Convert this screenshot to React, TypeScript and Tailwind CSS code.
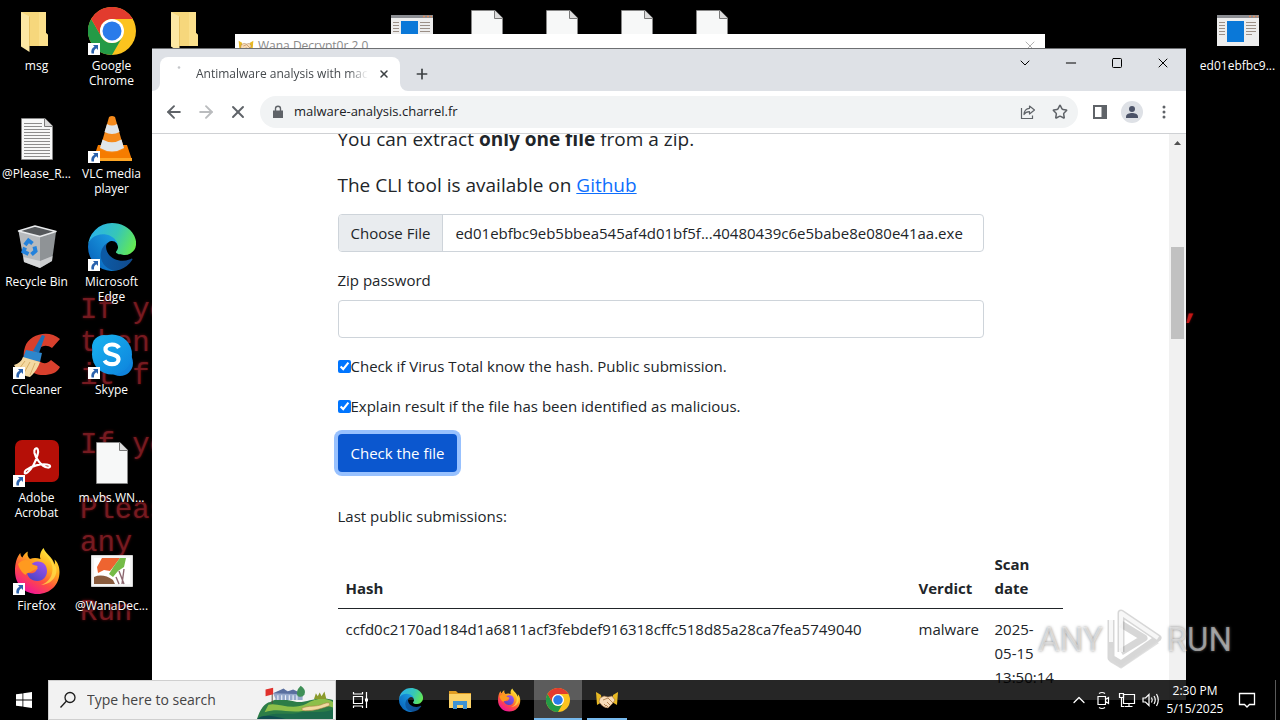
import { useState, type ReactNode } from 'react';
import {
  ArrowLeft,
  ArrowRight,
  ChevronDown,
  ChevronUp,
  Minus,
  Plus,
  Square,
  Star,
  X,
} from 'lucide-react';

type IconProps = { className?: string };

/* ---------- App icons ---------- */

function ChromeIcon({ className }: IconProps) {
  return (
    <svg viewBox="0 0 48 48" className={className} aria-hidden="true">
      <circle cx="24" cy="24" r="24" fill="#fcc31e" />
      <path d="M3.2 12A24 24 0 0 0 24 48L34.4 30A12 12 0 0 1 13.6 30Z" fill="#249a46" />
      <path d="M3.2 12A24 24 0 0 1 44.8 12H24A12 12 0 0 0 13.6 30Z" fill="#e23b2e" />
      <circle cx="24" cy="24" r="12" fill="#fff" />
      <circle cx="24" cy="24" r="9.5" fill="#2a7bea" />
    </svg>
  );
}

function EdgeIcon({ className }: IconProps) {
  return (
    <svg viewBox="0 0 256 256" className={className} aria-hidden="true">
      <defs>
        <linearGradient id="edge-a" x1="0.2" y1="0.5" x2="1" y2="0.6">
          <stop offset="0" stopColor="#0c59a4" />
          <stop offset="1" stopColor="#114a8b" />
        </linearGradient>
        <linearGradient id="edge-b" x1="0.9" y1="0.2" x2="0.2" y2="0.9">
          <stop offset="0" stopColor="#1b9de2" />
          <stop offset="1" stopColor="#0a67be" />
        </linearGradient>
        <linearGradient id="edge-c" x1="0.05" y1="0.4" x2="1" y2="0.7">
          <stop offset="0" stopColor="#2bb4e6" />
          <stop offset="0.5" stopColor="#36c6b8" />
          <stop offset="1" stopColor="#66eb4e" />
        </linearGradient>
      </defs>
      <path fill="url(#edge-a)" d="M231 190.5c-3.4 1.8-6.9 3.4-10.5 4.7a101.9 101.9 0 0 1-35.9 6.4c-47.3 0-88.5-32.5-88.5-74.3.1-11.4 6.4-21.9 16.4-27.3-42.8 1.8-53.8 46.4-53.8 72.5 0 73.9 68.1 81.4 82.8 81.4 7.9 0 19.8-2.3 27-4.6l1.3-.4a128.2 128.2 0 0 0 66.6-52.8 4 4 0 0 0-5.4-5.6z" />
      <path fill="url(#edge-b)" d="M105.7 241.4A79.2 79.2 0 0 1 83 220.1 80.7 80.7 0 0 1 112.5 100c3.2-1.5 8.5-4.1 15.6-4a32.4 32.4 0 0 1 25.7 13 31.9 31.9 0 0 1 6.3 18.7c0-.2 24.5-79.6-80-79.6-43.9 0-80 41.7-80 78.2a130.2 130.2 0 0 0 12.1 56 128 128 0 0 0 156.4 67 75.5 75.5 0 0 1-62-8z" />
      <path fill="url(#edge-c)" d="M152.3 148.9c-.9 1-3.4 2.5-3.4 5.6 0 2.6 1.7 5.2 4.8 7.3 14.4 10.1 41.7 8.7 41.8 8.7a59.9 59.9 0 0 0 30.5-8.4 61.8 61.8 0 0 0 30.4-53.2c.3-22.4-8-37.3-11.3-43.9C223.7 23.7 176.3 0 128 0A128 128 0 0 0 0 126.2c.5-36.5 36.8-66 80-66 3.5 0 23.5.3 42 10.1 16.3 8.6 24.9 18.9 30.8 29.2 6.2 10.7 7.3 24.1 7.3 29.5 0 5.3-2.7 13.3-7.8 19.9z" />
    </svg>
  );
}

function FirefoxIcon({ className }: IconProps) {
  return (
    <svg viewBox="0 0 48 48" className={className} aria-hidden="true">
      <defs>
        <linearGradient id="fx-body" x1="0.8" y1="0.05" x2="0.25" y2="0.95">
          <stop offset="0" stopColor="#ffec3d" />
          <stop offset="0.35" stopColor="#ffab1f" />
          <stop offset="0.65" stopColor="#ff4f3f" />
          <stop offset="1" stopColor="#f0139a" />
        </linearGradient>
        <linearGradient id="fx-globe" x1="0.8" y1="0" x2="0.2" y2="1">
          <stop offset="0" stopColor="#a052f0" />
          <stop offset="1" stopColor="#4a44c4" />
        </linearGradient>
      </defs>
      <path
        fill="url(#fx-body)"
        d="M30.5 1C27 5 26.5 9 27.5 12C24 10.5 20 10.5 17 12C14.5 10 14.2 7 14.8 4.5C12 6 10.5 8 9.5 10.5C8 10 7.4 7.5 7.3 6C3.5 10.5 2 17 2 24C2 37.5 11.5 47 24.5 47C37.5 47 46.5 37.5 46.5 25C46.5 19.5 44.5 15 41.5 12.5C42 14.5 42 16 41.5 17.5C39.5 9.5 33 7.5 30.5 1Z"
      />
      <path fill="url(#fx-globe)" d="M24 14.5C30 14 34 18 34 24C34 30 29.5 34 24.5 34C18 34 14 29.5 14 25C17 27.5 21 26 22.5 24.5L25 21L17.5 18.5C18.5 16.5 21 15 24 14.5Z" />
      <path fill="#ff9a1f" d="M5 17C9 12 15 12 19 15C18 17 20 18 24.5 19C25 21.5 21 22.5 18.5 24.5C16.5 26 13.5 25.5 12.5 28C9 26 6 21 5 17Z" />
      <path fill="#ffe04a" opacity=".75" d="M31 4C33 10 40 13 39.5 23C39 31 34 36 28 38C37 37.5 43.5 31 43.5 23C43.5 20 42 18 41 18.5C39 11 33.5 9 31 4Z" />
    </svg>
  );
}

function FolderIcon({ className }: IconProps) {
  return (
    <svg viewBox="0 0 48 48" className={className} aria-hidden="true">
      <path d="M8 5H33V26L35 28V39H14Z" fill="#f6d77c" />
      <path d="M26 5H33V26L35 28V39H26Z" fill="#fbe08c" />
      <path d="M8 5L16.5 9.5V45L8 39.5Z" fill="#fde8a4" />
      <path d="M16.5 9.5V39" stroke="#e3bb5a" strokeWidth=".8" />
    </svg>
  );
}

function PageIcon({ className, lined = false }: IconProps & { lined?: boolean }) {
  return (
    <svg viewBox="0 0 48 48" className={className} aria-hidden="true">
      <path d="M8.5 3.5H32L39.5 11V44.5H8.5Z" fill="#f7f8f8" stroke="#8c8c8c" strokeWidth=".7" />
      <path d="M31.5 3.5V11.5H39.5" fill="#dcdcdc" stroke="#7a7a7a" strokeWidth="1" />
      {lined && (
        <path
          d="M11 8.5H29M11 11.5H29M11 14.5H37M11 17.5H37M11 20.5H37M11 23.5H37M11 26.5H37M11 29.5H37M11 32.5H37M11 35.5H37M11 38.5H37M11 41.5H37"
          stroke="#8d8d8d"
          strokeWidth="1"
        />
      )}
    </svg>
  );
}

function ProgramIcon({ className }: IconProps) {
  return (
    <svg viewBox="0 0 48 48" className={className} aria-hidden="true">
      <path d="M3 8H45V39H3Z" fill="#ededed" />
      <path d="M3 8H45V11H3Z" fill="#8b8d92" />
      <path d="M35 9.5H37M39 9.5H41M42.5 9.5H44" stroke="#e08a5a" strokeWidth="1.5" />
      <path d="M13 14H30V35H13Z" fill="#0a78d8" />
      <path d="M5 15.5H11M5 18.5H11M5 21.5H11M5 24.5H11M5 27.5H11M32 15.5H42M32 18.5H42M32 21.5H42M32 24.5H42M32 27.5H38" stroke="#9b8f86" strokeWidth="1" />
    </svg>
  );
}

function VlcIcon({ className }: IconProps) {
  return (
    <svg viewBox="0 0 48 48" className={className} aria-hidden="true">
      <path d="M10 30H39L44 45H5Z" fill="#f57c00" />
      <path d="M5 43H44V46H5Z" fill="#ffa726" />
      <path d="M21 2Q24 0 27 2L36 34Q24 41 12 34Z" fill="#f58a1c" />
      <path d="M19 9Q24 12 29 9L31.5 17Q24 21 16.5 17Z" fill="#dfe5ea" />
      <path d="M14.5 24.5Q24 30 33.5 24.5L36 33Q24 40 12 33Z" fill="#dfe5ea" />
    </svg>
  );
}

function RecycleIcon({ className }: IconProps) {
  return (
    <svg viewBox="0 0 48 48" className={className} aria-hidden="true">
      <path d="M5.5 8L27 13V45L11 39Z" fill="#b7babd" />
      <path d="M43 9L27 13V45L39 38Z" fill="#8f9396" />
      <path d="M5.5 8L22 3L43 8.5L27 13.5Z" fill="#55585b" stroke="#e8eaec" strokeWidth="1.5" strokeLinejoin="round" />
      <path d="M10.5 34L27 38V45L11 39ZM27 38L39.5 33L39 38L27 45Z" fill="#e4e6e7" opacity=".7" />
      <g fill="none" stroke="#2382dc" strokeWidth="4">
        <path d="M12 22L15.500 17.500L19.500 20.500" />
        <path d="M21.500 23.500L22.500 28L18.500 31.500" />
        <path d="M15.500 31L10.500 28.500L12 24.500" />
      </g>
    </svg>
  );
}

function CCleanerIcon({ className }: IconProps) {
  return (
    <svg viewBox="0 0 48 48" className={className} aria-hidden="true">
      <path d="M47 8C36-2 16 3 12 16C7 30 16 44 30 44C38 44 44 42 47 36L38 29C34 34 26 33 24 26C22 18 31 11 39 17Z" fill="#d8402d" />
      <path d="M29 4L32 5L26 22L20 20Z" fill="#1d6fb7" />
      <path d="M13 19L29 22L27 31L10 27Z" fill="#2d86cc" />
      <path d="M10 26L27 31Q24 40 17 46Q6 44 1 34Q8 32 10 26Z" fill="#f4d9a2" />
      <path d="M12 30L6 38M17 31L11 42M22 32L17 44" stroke="#d7ad65" strokeWidth="1" />
    </svg>
  );
}

function SkypeIcon({ className }: IconProps) {
  return (
    <svg viewBox="0 0 48 48" className={className} aria-hidden="true">
      <defs>
        <linearGradient id="skype-bg" x1="0" y1="0" x2="1" y2="1">
          <stop offset="0" stopColor="#18b4f0" />
          <stop offset="1" stopColor="#0e82dc" />
        </linearGradient>
      </defs>
      <circle cx="16" cy="16" r="12" fill="url(#skype-bg)" />
      <circle cx="32" cy="32" r="13" fill="#0f84dd" />
      <circle cx="24" cy="23.5" r="20" fill="url(#skype-bg)" />
      <path
        d="M31 17C29.5 14.3 26.8 13.5 24 13.5C20 13.5 17.5 15.5 17.5 18.3C17.5 25 30.5 21.5 30.5 28.5C30.5 31.5 27.5 33.2 24 33.2C20.5 33.2 18 32 16.5 29.5"
        fill="none"
        stroke="#fff"
        strokeWidth="4.2"
      />
    </svg>
  );
}

function AcrobatIcon({ className }: IconProps) {
  return (
    <svg viewBox="0 0 48 48" className={className} aria-hidden="true">
      <rect x="2" y="1" width="44" height="42" rx="7" fill="#b50f07" />
      <path
        d="M22 10C24.5 8 26 11 24.5 16C22.5 23 18 30.5 14.5 33.5C11.5 36 10.5 33 13 31C18 27 28 24.5 34 25.5C38.5 26.2 37.5 29 34.5 28.5C28 27.5 22.500 18.500 21.500 14C21.200 12 21.300 10.700 22 10Z"
        fill="none"
        stroke="#fff"
        strokeWidth="2.2"
      />
    </svg>
  );
}

function PictureIcon({ className }: IconProps) {
  return (
    <svg viewBox="0 0 48 48" className={className} aria-hidden="true">
      <path d="M3.5 8.5H44.5V39.5H3.5Z" fill="#f4f4f4" stroke="#d5d5d5" />
      <path d="M6 11H42V37H6Z" fill="#fff" />
      <path d="M14 11H32L26 19L22 24L16 23L10 26L9 20Z" fill="#ee6430" />
      <path d="M32 11H38L36 20L30 24L25 30L21 27L26 19Z" fill="#74bb47" />
      <path d="M6 30Q15 26 25 33L27 37H6Z" fill="#8a5c3e" />
      <path d="M31 24L36 37M36 22L34 37M28 30L31 37" stroke="#8d6870" strokeWidth="1.4" />
    </svg>
  );
}

function HandshakeIcon({ className }: IconProps) {
  return (
    <svg viewBox="0 0 24 24" className={className} aria-hidden="true">
      <path d="M1 4L6 7L7 14L2 17Z" fill="#e8b923" />
      <path d="M23 4L18 7L17 14L22 17Z" fill="#e8b923" />
      <path d="M5 10L9 8L13 9L17 8L20 12L18 15L13 20Q8 20 4 14Z" fill="#f8dcb8" stroke="#9a6a3a" strokeWidth=".6" />
      <path d="M8 12L13 10L18 15M9 16L11 18M12 14L15 17M11 17L13 19" fill="none" stroke="#a5713e" strokeWidth=".8" />
    </svg>
  );
}

function ExplorerIcon({ className }: IconProps) {
  return (
    <svg viewBox="0 0 24 24" className={className} aria-hidden="true">
      <path d="M1 3H8L10 5H23V8H1Z" fill="#e09c22" />
      <path d="M1 6H23V20H1Z" fill="#fbd268" />
      <path d="M5 21V13H19V21H15V17H9V21Z" fill="#3f93d2" />
    </svg>
  );
}

function ShareIcon({ className }: IconProps) {
  return (
    <svg viewBox="0 0 16 16" className={className} fill="none" stroke="#5f6368" strokeWidth="1.2" aria-hidden="true">
      <path d="M1.5 4V14.5H12.5V11.5" />
      <path d="M9.5 2L14.5 6L9.5 10V7.7C7 7.7 5.2 8.5 4 10.5C4.2 7 6.2 4.6 9.5 4.3Z" strokeLinejoin="round" />
    </svg>
  );
}

function GolfArt({ className }: IconProps) {
  return (
    <svg viewBox="0 0 80 40" className={className} aria-hidden="true">
      <path d="M0 40C3 30 8 23 14 22C22 17 32 20 42 22C54 23 62 15 80 20V40Z" fill="#2c7d47" />
      <path d="M12 25C22 22 36 32 52 24C62 18 72 17 80 22V28C66 23 58 31 44 32C30 33 22 28 8 33Z" fill="#8dbf4a" />
      <path d="M5 40C14 31 28 36 42 34C56 31 66 35 80 30V40Z" fill="#1c6a4c" />
      <path d="M0 40C6 34 18 37 30 40Z" fill="#0f4d50" />
      <path d="M47 29C54 25 62 28 70 24Q78 21 76 26C66 30 56 32 48 31Z" fill="#f0d9a0" stroke="#a97d3f" strokeWidth=".6" />
      <path d="M17 13L28 9L34 11L48 13V20H20Z" fill="#96a9cc" />
      <path d="M17 13L28 8L32 11L38 9L49 14Z" fill="#5a6f9f" />
      <path d="M22 15V20M26 15V20M30 15V20M34 15V20M38 15V20M42 15V20" stroke="#eef2fa" strokeWidth="1.2" />
      <path d="M46 5Q52 9 50 14Q48 18 43 16Q40 11 46 5Z" fill="#3f8f57" />
      <path d="M60 19L62 13L64 16L66 12L68 16L71 11L73 19Z" fill="#8a9a2c" />
      <path d="M16 8V24" stroke="#5a4a3a" strokeWidth="1" />
      <path d="M17 7L9 9V16L17 14Z" fill="#e0312c" />
    </svg>
  );
}

/* ---------- Desktop ---------- */

function ShortcutArrow() {
  return (
    <svg viewBox="0 0 12 12" className="absolute bottom-0 left-0 size-3" aria-hidden="true">
      <path d="M0 0H12V12H0Z" fill="#fff" />
      <path d="M5 2H10V7L8.3 5.3C6.5 6.5 5.8 8 6 10.5H3.5C2.8 7 4 5 6.5 3.7Z" fill="#2a62ad" />
    </svg>
  );
}

function DesktopItem({ label, shortcut, children }: { label?: string; shortcut?: boolean; children: ReactNode }) {
  return (
    <a href="#" className="flex h-[108px] w-[75px] flex-col items-center pt-[7px] pr-0.5">
      <span className="relative block size-12">
        {children}
        {shortcut && <ShortcutArrow />}
      </span>
      {label && (
        <span className="mt-[3px] text-center text-xs leading-[15px] text-white [text-shadow:0_1px_2px_#000]">
          {label}
        </span>
      )}
    </a>
  );
}

function Wallpaper() {
  return (
    <div className="absolute inset-x-20 top-[294px] font-['Liberation_Mono','Courier_New',monospace] text-[29px] leading-[33px] text-[#761a20] [text-shadow:0_0_3px_#5a0c10]">
      <div className="flex justify-between">
        <span>If you</span>
        <span className="font-bold text-[#c01818]">,</span>
      </div>
      <p>then</p>
      <p>it from</p>
      <p className="mt-9">If you</p>
      <p className="mt-8">Please</p>
      <p>any</p>
      <p className="mt-9">Run</p>
    </div>
  );
}

function DesktopIcons() {
  return (
    <div className="absolute inset-x-0 top-0 flex pr-1">
      <div>
        <DesktopItem label="msg"><FolderIcon /></DesktopItem>
        <DesktopItem label="@Please_R..."><PageIcon lined /></DesktopItem>
        <DesktopItem label="Recycle Bin"><RecycleIcon /></DesktopItem>
        <DesktopItem label="CCleaner" shortcut><CCleanerIcon /></DesktopItem>
        <DesktopItem label="Adobe Acrobat" shortcut><AcrobatIcon /></DesktopItem>
        <DesktopItem label="Firefox" shortcut><FirefoxIcon /></DesktopItem>
      </div>
      <div>
        <DesktopItem label="Google Chrome" shortcut><ChromeIcon /></DesktopItem>
        <DesktopItem label="VLC media player" shortcut><VlcIcon /></DesktopItem>
        <DesktopItem label="Microsoft Edge" shortcut><EdgeIcon /></DesktopItem>
        <DesktopItem label="Skype" shortcut><SkypeIcon /></DesktopItem>
        <DesktopItem label="m.vbs.WN..."><PageIcon /></DesktopItem>
        <DesktopItem label="@WanaDec..."><PictureIcon /></DesktopItem>
      </div>
      <DesktopItem><FolderIcon /></DesktopItem>
      <div className="ml-[150px] flex">
        <DesktopItem><ProgramIcon /></DesktopItem>
        <DesktopItem><PageIcon /></DesktopItem>
        <DesktopItem><PageIcon /></DesktopItem>
        <DesktopItem><PageIcon /></DesktopItem>
        <DesktopItem><PageIcon /></DesktopItem>
      </div>
      <div className="ml-auto">
        <DesktopItem label="ed01ebfbc9..."><ProgramIcon /></DesktopItem>
      </div>
    </div>
  );
}

function DecryptorWindow() {
  return (
    <div className="absolute inset-x-[235px] top-[34px] flex h-6 items-center gap-1 bg-white pr-[7px] pl-[3px] text-xs text-[#8a8a8a]">
      <HandshakeIcon className="size-4" />
      <span>Wana Decrypt0r 2.0</span>
      <button type="button" aria-label="Close" className="ml-auto">
        <X className="size-4" strokeWidth={1} />
      </button>
    </div>
  );
}

/* ---------- Browser ---------- */

function TabStrip() {
  const caption = 'flex h-7 w-[46px] items-center justify-center text-black';
  return (
    <div className="flex h-[42px] items-end bg-[#dee1e6] pl-2">
      <div className="relative flex h-[34px] w-60 items-center rounded-t-lg bg-white pr-2 pl-3">
        <svg viewBox="0 0 8 8" className="absolute bottom-0 -left-2 size-2" aria-hidden="true">
          <path d="M8 0V8H0A8 8 0 0 0 8 0Z" fill="#fff" />
        </svg>
        <svg viewBox="0 0 8 8" className="absolute -right-2 bottom-0 size-2" aria-hidden="true">
          <path d="M0 0V8H8A8 8 0 0 1 0 0Z" fill="#fff" />
        </svg>
        <svg viewBox="0 0 16 16" className="size-4" aria-hidden="true">
          <circle cx="7" cy="1.5" r="1.3" fill="#c4c6c9" />
        </svg>
        <span className="ml-2 flex-1 overflow-hidden text-xs whitespace-nowrap text-[#45494d] [mask-image:linear-gradient(to_right,#000_88%,transparent)]">
          Antimalware analysis with mach
        </span>
        <button type="button" aria-label="Close tab" className="ml-2 flex size-4 items-center justify-center">
          <X className="size-3 text-[#3c4043]" strokeWidth={3} />
        </button>
      </div>
      <button type="button" aria-label="New tab" className="mb-[3px] ml-2 flex size-7 items-center justify-center">
        <Plus className="size-4 text-[#3c4043]" strokeWidth={2.5} />
      </button>
      <div className="ml-auto flex self-start">
        <button type="button" aria-label="Search tabs" className={caption}><ChevronDown className="size-4" strokeWidth={1.5} /></button>
        <button type="button" aria-label="Minimize" className={caption}><Minus className="size-4" strokeWidth={1.5} /></button>
        <button type="button" aria-label="Maximize" className={caption}><Square className="size-3" strokeWidth={2} /></button>
        <button type="button" aria-label="Close" className={caption}><X className="size-4" strokeWidth={1.5} /></button>
      </div>
    </div>
  );
}

function Toolbar() {
  const btn = 'flex size-8 shrink-0 items-center justify-center text-[#5f6368]';
  return (
    <div className="flex h-[43px] items-center gap-1.5 border-b border-[#cfd1d4] bg-white px-1.5">
      <div className="flex">
        <button type="button" aria-label="Back" className={btn}><ArrowLeft className="size-5" strokeWidth={2.3} /></button>
        <button type="button" aria-label="Forward" className={btn}><ArrowRight className="size-5 text-[#babcbe]" strokeWidth={2.3} /></button>
        <button type="button" aria-label="Stop" className={btn}><X className="size-5" strokeWidth={2.3} /></button>
      </div>
      <div className="flex h-8 flex-1 items-center rounded-full bg-[#f1f3f4] pr-0.5 pl-3">
        <svg viewBox="0 0 12 14" className="mr-2.5 h-3.5 w-3" aria-hidden="true">
          <path d="M1 5.5H11V13H1Z" fill="#5f6368" />
          <path d="M3.5 6V3.8A2.5 2.5 0 0 1 8.5 3.8V6" fill="none" stroke="#5f6368" strokeWidth="1.4" />
        </svg>
        <input
          type="text"
          aria-label="Address"
          defaultValue="malware-analysis.charrel.fr"
          className="min-w-0 flex-1 bg-transparent text-[13px] text-[#202124] outline-none"
        />
        <button type="button" aria-label="Share" className={btn}><ShareIcon className="size-4" /></button>
        <button type="button" aria-label="Bookmark" className={btn}><Star className="size-4" strokeWidth={2.3} /></button>
      </div>
      <div className="flex">
        <button type="button" aria-label="Side panel" className={btn}>
          <svg viewBox="0 0 14 14" className="size-3.5" aria-hidden="true">
            <path d="M1 1H13V13H1Z" fill="none" stroke="#5f6368" strokeWidth="2" />
            <path d="M8.5 1H13V13H8.5Z" fill="#5f6368" />
          </svg>
        </button>
        <button type="button" aria-label="Profile" className={btn}>
          <svg viewBox="0 0 22 22" className="size-[22px]" aria-hidden="true">
            <circle cx="11" cy="11" r="11" fill="#dee1e6" />
            <g fill="#4c5368">
              <circle cx="11" cy="8" r="3" />
              <path d="M5 17V15.500C5 13 8.500 12 11 12C13.500 12 17 13 17 15.500V17Z" />
            </g>
          </svg>
        </button>
        <button type="button" aria-label="Menu" className={btn}>
          <svg viewBox="0 0 16 16" className="size-4" fill="#5f6368" aria-hidden="true">
            <circle cx="8" cy="3" r="1.5" />
            <circle cx="8" cy="8" r="1.5" />
            <circle cx="8" cy="13" r="1.5" />
          </svg>
        </button>
      </div>
    </div>
  );
}

function SubmitPage() {
  const [virusTotal, setVirusTotal] = useState(true);
  const [explain, setExplain] = useState(true);

  return (
    <main className="mx-auto -mt-2.5 max-w-[646px] text-[15px] leading-6 text-[#212529]">
      <p className="mb-4 text-[19px] leading-[30px]">
        You can extract <strong className="font-bold">only one file</strong> from a zip.
      </p>
      <p className="mb-3.5 text-[19px] leading-[30px]">
        The CLI tool is available on <a href="#" className="text-[#0d6efd] underline">Github</a>
      </p>

      <form onSubmit={(e) => e.preventDefault()}>
        <label className="flex h-[38px] overflow-hidden rounded border border-[#ced4da]">
          <input type="file" className="sr-only" />
          <span className="border-r border-[#ced4da] bg-[#e9ecef] px-3 py-1.5">Choose File</span>
          <span className="px-3 py-1.5 whitespace-nowrap">ed01ebfbc9eb5bbea545af4d01bf5f...40480439c6e5babe8e080e41aa.exe</span>
        </label>

        <label htmlFor="zip-password" className="mt-4 mb-2 block">Zip password</label>
        <input id="zip-password" type="password" className="block h-[38px] w-full rounded border border-[#ced4da] px-3" />

        <label className="mt-4 flex items-center">
          <input type="checkbox" className="size-[13px]" checked={virusTotal} onChange={(e) => setVirusTotal(e.target.checked)} />
          Check if Virus Total know the hash. Public submission.
        </label>
        <label className="mt-4 flex items-center">
          <input type="checkbox" className="size-[13px]" checked={explain} onChange={(e) => setExplain(e.target.checked)} />
          Explain result if the file has been identified as malicious.
        </label>

        <button type="submit" className="mt-4 h-[38px] rounded bg-[#0b57cf] px-[13px] text-white ring-4 ring-[#98c1fe]">
          Check the file
        </button>
      </form>

      <p className="mt-8 mb-4">Last public submissions:</p>

      <table className="w-[725px] table-fixed border-collapse text-left">
        <thead>
          <tr className="border-b border-[#212529] align-bottom">
            <th className="p-2 font-bold">Hash</th>
            <th className="w-[76px] p-2 font-bold">Verdict</th>
            <th className="w-[76px] p-2 font-bold">Scan date</th>
          </tr>
        </thead>
        <tbody>
          <tr className="align-top">
            <td className="p-2">ccfd0c2170ad184d1a6811acf3febdef916318cffc518d85a28ca7fea5749040</td>
            <td className="p-2">malware</td>
            <td className="p-2">2025-05-15 13:50:14</td>
          </tr>
        </tbody>
      </table>
    </main>
  );
}

function BrowserWindow() {
  return (
    <div className="absolute top-12 right-[94px] bottom-5 left-[152px] flex flex-col overflow-hidden border-t border-[#6d6f72] bg-white">
      <TabStrip />
      <Toolbar />
      <div className="flex min-h-0 flex-1">
        <div className="min-w-0 flex-1 overflow-hidden">
          <SubmitPage />
        </div>
        <div className="flex w-[17px] flex-col items-center bg-[#f1f1f1]">
          <svg viewBox="0 0 17 17" className="size-[17px]" aria-hidden="true">
            <path d="M5 11L8.5 7L12 11Z" fill="#505050" />
          </svg>
          <div className="mt-24 h-[92px] w-[13px] bg-[#c1c1c1]" />
        </div>
      </div>
    </div>
  );
}

/* ---------- Taskbar ---------- */

function Taskbar() {
  const app = 'flex h-10 w-12 items-center justify-center';
  return (
    <div className="absolute inset-x-0 bottom-0 flex h-10 items-center bg-black/85 text-white">
      <button type="button" aria-label="Start" className="flex w-12 justify-center">
        <svg viewBox="0 0 16 16" className="size-4" fill="#fff" aria-hidden="true">
          <path d="M0 2.3L6.5 1.4V7.6H0ZM7.3 1.3L16 0V7.6H7.3ZM0 8.4H6.5V14.6L0 13.7ZM7.3 8.4H16V16L7.3 14.7Z" />
        </svg>
      </button>
      <label className="flex h-full w-72 items-center border border-[#cfcfcf] bg-[#f2f2f2]">
        <svg viewBox="0 0 18 18" className="ml-2.5 size-[18px] shrink-0" fill="none" stroke="#1c1c1c" strokeWidth="1.3" aria-hidden="true">
          <circle cx="11" cy="6.5" r="5" />
          <path d="M7.5 10L1.5 16.5" />
        </svg>
        <input
          type="text"
          placeholder="Type here to search"
          aria-label="Search"
          className="ml-2.5 min-w-0 flex-1 bg-transparent text-sm text-[#333] outline-none placeholder:text-[#444]"
        />
        <GolfArt className="h-[38px] w-20 shrink-0" />
      </label>
      <button type="button" aria-label="Task view" className={app}>
        <svg viewBox="0 0 18 18" className="size-[18px]" fill="none" stroke="#fff" strokeWidth="1.2" aria-hidden="true">
          <path d="M2.5 5.5H11.5V12.5H2.5ZM2.5 1V3H11.5V1M2.5 17V15H11.5V17M15.5 1V17" />
          <path d="M14 7.5H17V10.5H14Z" fill="#fff" stroke="none" />
        </svg>
      </button>
      <div className="ml-[3px] flex gap-px">
        <button type="button" aria-label="Edge" className={app}><EdgeIcon className="size-6" /></button>
        <button type="button" aria-label="File Explorer" className={app}><ExplorerIcon className="size-6" /></button>
        <button type="button" aria-label="Firefox" className={app}><FirefoxIcon className="size-6" /></button>
        <button type="button" aria-label="Chrome" className={`${app} border-b-2 border-[#76b9ed] bg-white/25 pt-0.5`}><ChromeIcon className="size-6" /></button>
        <button type="button" aria-label="Wana Decrypt0r" className="mx-1 flex h-10 w-10 items-center justify-center border-b-2 border-[#76b9ed] pt-0.5">
          <HandshakeIcon className="size-6" />
        </button>
      </div>

      <div className="ml-auto flex h-full items-center">
        <button type="button" aria-label="Show hidden icons" className="flex w-6 justify-center"><ChevronUp className="size-5" strokeWidth={1.5} /></button>
        <svg viewBox="0 0 24 24" className="size-6" fill="none" stroke="#fff" strokeWidth="1.2" aria-hidden="true">
          <path d="M7 8.5H14.5V16.5H7ZM14.5 11.5L17.5 9.5V15.5L14.5 13.5M8 5.5Q11 3.5 14 5.5M8 19.5Q11 21.5 14 19.5" />
        </svg>
        <svg viewBox="0 0 24 24" className="size-6" fill="none" stroke="#fff" strokeWidth="1.2" aria-hidden="true">
          <path d="M8.5 6.5H19.5V15.5H8.5ZM14 15.5V18.5M9.5 18.5H17.5" />
          <path d="M4.5 5.5H8.5V9.5H4.5ZM6.5 9.5V18.5H9" />
        </svg>
        <svg viewBox="0 0 24 24" className="size-6" fill="none" stroke="#fff" strokeWidth="1.2" aria-hidden="true">
          <path d="M4 10H6.5L10 6.5V17.5L6.5 14H4ZM12.5 9.5Q14 12 12.5 14.5M15 8Q17.5 12 15 16M17.5 6Q21 12 17.5 18" />
        </svg>
        <div className="flex w-16 flex-col items-center text-xs leading-[18px] whitespace-nowrap">
          <span>2:30 PM</span>
          <span>5/15/2025</span>
        </div>
        <button type="button" aria-label="Notifications" className="flex w-10 justify-center">
          <svg viewBox="0 0 18 18" className="size-[18px]" fill="none" stroke="#fff" strokeWidth="1.3" aria-hidden="true">
            <path d="M1.5 2.5H16.5V13.5H11.5L9 16L6.5 13.5H1.5Z" />
          </svg>
        </button>
        <div className="ml-2 h-full w-[5px] border-l border-[#5a5a5a]" />
      </div>
    </div>
  );
}

function Watermark() {
  return (
    <div className="pointer-events-none absolute right-12 bottom-12 flex items-center gap-1 font-['Liberation_Sans_Narrow','Roboto',sans-serif] text-[33px] leading-[60px] text-white/50 [text-shadow:0_0_3px_rgba(110,110,110,0.8)]">
      <span>ANY</span>
      <svg viewBox="0 0 56 64" className="h-16 w-14" fill="none" aria-hidden="true">
        <g stroke="#8c8c8c" strokeOpacity=".35" strokeWidth="7" strokeLinejoin="round">
          <path d="M14 44V5L51 30L14 56L4 50V12" />
          <path d="M14 44L37 30L14 16" />
        </g>
        <g stroke="#fff" strokeOpacity=".8" strokeWidth="4" strokeLinejoin="round">
          <path d="M14 44V5L51 30" />
          <path d="M4 34V12" />
        </g>
        <path d="M51 34L14 59L4 53V40" stroke="#d9d9d9" strokeOpacity=".8" strokeWidth="3" strokeLinejoin="round" />
      </svg>
      <span>RUN</span>
    </div>
  );
}

export default function App() {
  return (
    <div className="relative h-screen w-full overflow-hidden bg-black font-['Segoe_UI','Open_Sans','Noto_Sans',sans-serif]">
      <Wallpaper />
      <DesktopIcons />
      <DecryptorWindow />
      <BrowserWindow />
      <Taskbar />
      <Watermark />
    </div>
  );
}
